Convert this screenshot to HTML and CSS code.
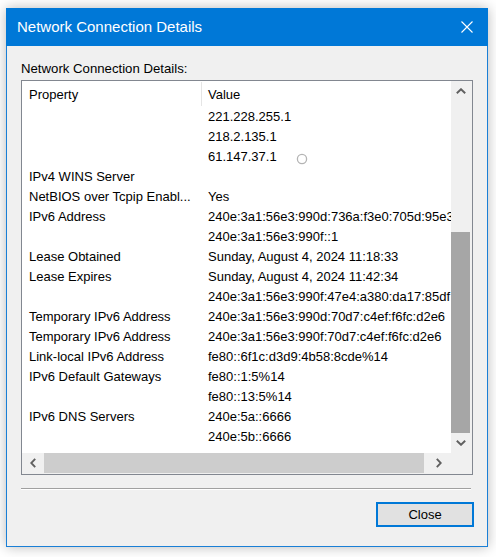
FILE: index.html
```html
<!DOCTYPE html>
<html>
<head>
<meta charset="utf-8">
<title>Network Connection Details</title>
<link rel="stylesheet" href="styles.css">
</head>
<body>
<div class="window">
  <div class="titlebar">
    <span class="title">Network Connection Details</span>
    <svg class="close-x" width="12" height="12" viewBox="0 0 12 12"><path d="M0.5 0.5 L11.5 11.5 M11.5 0.5 L0.5 11.5" stroke="#ffffff" stroke-width="1.1" fill="none"/></svg>
  </div>
  <div class="content">
    <div class="label">Network Connection Details:</div>
    <div class="listbox">
      <div class="list">
        <div class="row header"><div class="c1">Property</div><div class="c2">Value</div></div>
        <div class="row"><div class="c1"></div><div class="c2">221.228.255.1</div></div>
        <div class="row"><div class="c1"></div><div class="c2">218.2.135.1</div></div>
        <div class="row"><div class="c1"></div><div class="c2">61.147.37.1</div></div>
        <div class="row"><div class="c1">IPv4 WINS Server</div><div class="c2"></div></div>
        <div class="row"><div class="c1">NetBIOS over Tcpip Enabl...</div><div class="c2">Yes</div></div>
        <div class="row"><div class="c1">IPv6 Address</div><div class="c2">240e:3a1:56e3:990d:736a:f3e0:705d:95e3</div></div>
        <div class="row"><div class="c1"></div><div class="c2">240e:3a1:56e3:990f::1</div></div>
        <div class="row"><div class="c1">Lease Obtained</div><div class="c2">Sunday, August 4, 2024 11:18:33</div></div>
        <div class="row"><div class="c1">Lease Expires</div><div class="c2">Sunday, August 4, 2024 11:42:34</div></div>
        <div class="row"><div class="c1"></div><div class="c2">240e:3a1:56e3:990f:47e4:a380:da17:85df</div></div>
        <div class="row"><div class="c1">Temporary IPv6 Address</div><div class="c2">240e:3a1:56e3:990d:70d7:c4ef:f6fc:d2e6</div></div>
        <div class="row"><div class="c1">Temporary IPv6 Address</div><div class="c2">240e:3a1:56e3:990f:70d7:c4ef:f6fc:d2e6</div></div>
        <div class="row"><div class="c1">Link-local IPv6 Address</div><div class="c2">fe80::6f1c:d3d9:4b58:8cde%14</div></div>
        <div class="row"><div class="c1">IPv6 Default Gateways</div><div class="c2">fe80::1:5%14</div></div>
        <div class="row"><div class="c1"></div><div class="c2">fe80::13:5%14</div></div>
        <div class="row"><div class="c1">IPv6 DNS Servers</div><div class="c2">240e:5a::6666</div></div>
        <div class="row"><div class="c1"></div><div class="c2">240e:5b::6666</div></div>
        <svg class="cursor" width="12" height="12" viewBox="0 0 12 12"><circle cx="6" cy="6" r="4.6" fill="none" stroke="#b4b4b4" stroke-width="1.3"/></svg>
      </div>
      <div class="vscroll">
        <div class="vbtn"><svg width="10" height="6" viewBox="0 0 10 6"><polyline points="0.8,5.2 5,1.2 9.2,5.2" fill="none" stroke="#606060" stroke-width="1.9"/></svg></div>
        <div class="vtrack"><div class="vthumb"></div></div>
        <div class="vbtn"><svg width="10" height="6" viewBox="0 0 10 6"><polyline points="0.8,0.8 5,4.8 9.2,0.8" fill="none" stroke="#606060" stroke-width="1.9"/></svg></div>
      </div>
      <div class="hscroll">
        <div class="hbtn left"><svg width="6" height="10" viewBox="0 0 6 10"><polyline points="5.2,0.8 1.2,5 5.2,9.2" fill="none" stroke="#606060" stroke-width="1.9"/></svg></div>
        <div class="hthumb"></div>
        <div class="htrack"></div>
        <div class="hbtn right"><svg width="6" height="10" viewBox="0 0 6 10"><polyline points="0.8,0.8 4.8,5 0.8,9.2" fill="none" stroke="#606060" stroke-width="1.9"/></svg></div>
      </div>
      <div class="corner"></div>
    </div>
    <div class="sep"></div>
    <div class="footer"><button class="close-btn">Close</button></div>
  </div>
</div>
</body>
</html>
```
FILE: styles.css
```css
html, body {
  margin: 0;
  padding: 0;
}
body {
  width: 496px;
  height: 557px;
  background: #ffffff;
  font-family: "Liberation Sans", Arial, sans-serif;
  overflow: hidden;
  padding: 8px 0 0 6px;
  box-sizing: border-box;
}
.window {
  width: 482px;
  height: 539px;
  box-sizing: border-box;
  border: 1px solid #1a7fd6;
  border-top: none;
  background: #f0f0f0;
  box-shadow: 0 0 12px rgba(0, 0, 0, 0.28);
  display: flex;
  flex-direction: column;
}
.titlebar {
  height: 38px;
  margin: 0 -1px;
  background: #0078d7;
  display: flex;
  align-items: center;
  padding-left: 11px;
  padding-right: 15px;
  flex: 0 0 auto;
}
.title {
  color: #ffffff;
  font-size: 15px;
  line-height: 20px;
}
.close-x {
  margin-left: auto;
  display: block;
}
.content {
  padding: 14px 14px 0 14px;
  display: flex;
  flex-direction: column;
}
.label {
  font-size: 13.2px;
  line-height: 17px;
  height: 16px;
  color: #000;
}
.listbox {
  margin-top: 4px;
  width: 452px;
  height: 395px;
  box-sizing: border-box;
  border: 1px solid #828790;
  background: #ffffff;
  display: grid;
  grid-template-columns: 429px 21px;
  grid-template-rows: 372px 21px;
}
.list {
  position: relative;
  overflow: hidden;
  background: #ffffff;
  font-size: 13px;
  color: #000;
}
.row {
  display: flex;
  height: 20px;
  line-height: 22px;
  white-space: nowrap;
}
.row.header {
  height: 25px;
  line-height: 27px;
}
.c1 {
  flex: 0 0 179px;
  box-sizing: border-box;
  padding-left: 7px;
  overflow: hidden;
  height: 100%;
}
.c2 {
  flex: 0 0 auto;
  padding-left: 7px;
  height: 100%;
}
.header .c2 {
  border-left: 1px solid #e5e5e5;
  padding-left: 6px;
  margin-top: 1px;
  height: 24px;
  line-height: 25px;
}
.cursor {
  position: absolute;
  left: 274px;
  top: 72px;
}
.vscroll {
  background: #f0f0f0;
  display: flex;
  flex-direction: column;
  padding-right: 2px;
}
.vbtn {
  height: 20px;
  display: flex;
  align-items: center;
  justify-content: center;
}
.vbtn svg {
  display: block;
}
.vtrack {
  flex: 1 1 auto;
}
.vthumb {
  margin-top: 131px;
  height: 201px;
  background: #a6a6a6;
}
.hscroll {
  background: #f0f0f0;
  display: flex;
  padding-bottom: 1px;
}
.hbtn {
  display: flex;
  align-items: center;
  justify-content: center;
}
.hbtn svg {
  display: block;
}
.hbtn.left {
  width: 22px;
}
.hbtn.right {
  width: 18px;
  padding-right: 3px;
}
.hthumb {
  width: 380px;
  background: #cdcdcd;
}
.htrack {
  flex: 1 1 auto;
}
.corner {
  background: #f0f0f0;
}
.sep {
  margin-top: 13px;
  width: 450px;
  height: 0;
  border-top: 1px solid #a0a0a0;
  border-bottom: 1px solid #ffffff;
}
.footer {
  display: flex;
  justify-content: flex-end;
  margin-top: 12px;
  margin-right: -1px;
}
.close-btn {
  width: 98px;
  height: 25px;
  box-sizing: border-box;
  border: 2px solid #0078d7;
  background: #e1e1e1;
  font-family: "Liberation Sans", Arial, sans-serif;
  font-size: 13px;
  color: #000;
  padding: 0;
  margin: 0;
  border-radius: 0;
}
```
